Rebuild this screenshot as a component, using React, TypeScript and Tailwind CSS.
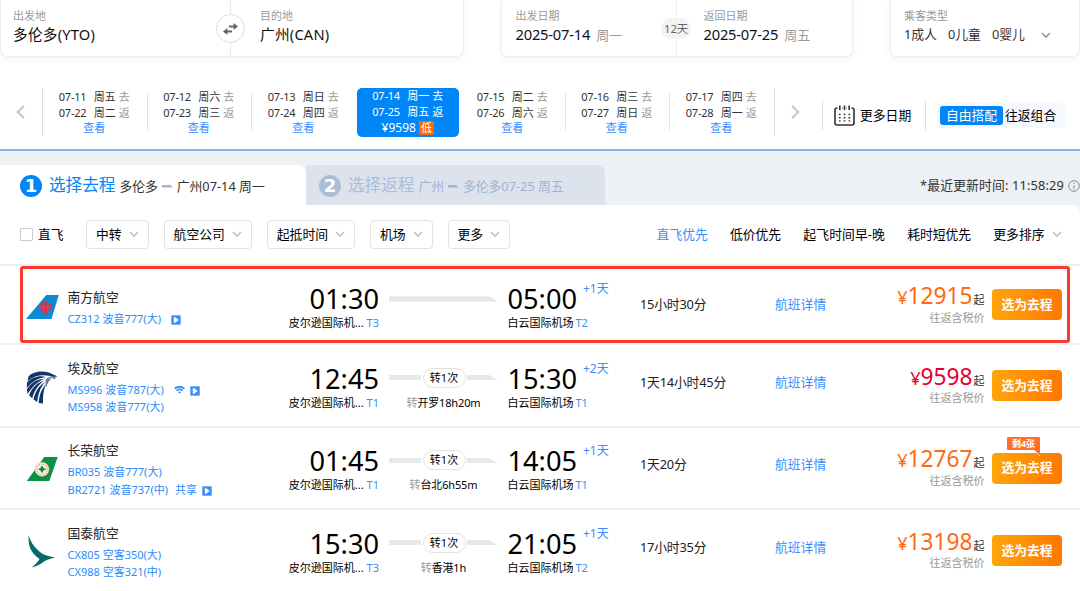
import type { ReactNode } from "react";
import clsx from "clsx";

interface Flight {
  airline: string;
  logo: ReactNode;
  lines: { text: string; wifi?: boolean; video?: boolean; share?: boolean }[];
  depart: string;
  departTerminal: string;
  arrive: string;
  arriveTerminal: string;
  plus: string;
  transfer?: string;
  duration: string;
  price: string;
  lowest?: boolean;
  left?: string;
  highlighted?: boolean;
}

const Chevron = ({ className }: { className?: string }) => (
  <svg className={clsx("shrink-0", className)} width="10" height="7" viewBox="0 0 10 7" fill="none" stroke="currentColor" strokeWidth="1.7">
    <path d="M1 1l4 4L9 1" />
  </svg>
);

const SwapIcon = () => (
  <svg width="15" height="12" viewBox="0 0 15 12" fill="none" stroke="#666" strokeWidth="1.9">
    <path d="M6 3.500h6M3 8.500h6" />
    <path d="M10.600 0L15 3.500 10.600 7zM4.400 5L0 8.500 4.400 12z" fill="#666" stroke="none" />
  </svg>
);

const CalendarIcon = () => (
  <svg width="21" height="21" viewBox="0 0 21 21" fill="none" stroke="#333" strokeWidth="1.6">
    <path d="M3.500 3H3a2 2 0 0 0-2 2v13a2 2 0 0 0 2 2h15a2 2 0 0 0 2-2V5a2 2 0 0 0-2-2h-.5M8 3h.5M12.500 3h.5M5.800.5v4.500M10.500.5v4.500M15.200.5v4.500" />
    <path d="M4.900 9.500h11.500M4.900 12.700h11.500M4.900 15.900h11.500" strokeWidth="1.400" strokeDasharray="1.700 3.100" />
  </svg>
);

const VideoIcon = () => (
  <svg width="10" height="10" viewBox="0 0 10 10" className="shrink-0">
    <path d="M.3.3h9.4v9.4H.3z" fill="#3b8dfb" />
    <path d="M2.8 2.3h1.4L7.6 5 4.2 7.7H2.8z" fill="#fff" />
  </svg>
);

const WifiIcon = () => (
  <svg width="11" height="8" viewBox="0 0 11 8" className="shrink-0" fill="none" stroke="#3b8dfb" strokeWidth="1.7">
    <path d="M.6 2.6c2.8-2.4 7-2.4 9.8 0M2.5 4.7c1.8-1.5 4.2-1.5 6 0" />
    <path d="M4 6l1.5 1.7L7 6c-.9-.8-2.1-.8-3 0z" fill="#3b8dfb" stroke="none" />
  </svg>
);

const SouthernLogo = () => (
  <svg width="33" height="26" viewBox="0 0 33 26">
    <path d="M20.3 1h12.5l-7.3 24H0z" fill="#0c8bd2" />
    <g fill="#ea2a3c">
      <path d="M17.6 9.600h4l-.4-2h-3.200zM17.800 10.300h3.800l-.4 7.200 1 1.500-2.500 1.600-2.500-1.600 1-1.500z" />
      <path d="M16.700 9.800c-2.200-1-3.600.4-3.600 2.400l1 2.700h1l.3 2 1.700-.5zM22.500 9.800c2.200-1 3.600.4 3.600 2.400l-1 2.700h-1l-.3 2-1.700-.5z" />
    </g>
    <path d="M17.200 10.500v5.500M22 10.500v5.500M18.200 12.500l1 .9M21 12.500l-1 .9M13.800 12.500h2M23.500 12.500h2" stroke="#8a78a8" strokeWidth=".7" />
  </svg>
);

const EgyptLogo = () => (
  <svg width="33" height="34" viewBox="0 0 33 34" fill="#12356b">
    <path d="M2.5 6.500C8 0 21 .3 27 4.400l4.500 1.900-3.400 1C20 4 10 4 1.500 11z" />
    <path d="M1 12.500C6 7 14 5 20 7.200 12 7.500 6 12 .8 18zM.8 19.500C5 13 11 9 18 9 11 12 6 17 1.600 24z" />
    <path d="M3 25C6 18 11 12.500 18 10.500 12 15 8 21 6.200 28.500zM7.500 29.500C9 22 13 15.500 19 12 14 18 12 25 11.200 32zM12.700 33C13 26 15.500 18.500 20 14c-2.600 6-3.200 13-3 19.500z" />
    <path d="M20 9c3-2.400 7-2.600 11-2.400-2 .6-2 1.300-1.600 2.700-2-1-4-.6-5.400.7-1.400 1.500-2.500 3.700-3.800 7.200-.7-3-.9-5.600-.2-8.200z" fill="#5f7da6" />
    <path d="M22 8.900l6-1.300-2 1.600z" fill="#fff" />
  </svg>
);

const EvaLogo = () => (
  <svg width="33" height="26" viewBox="0 0 33 26">
    <path d="M18.300 1h13.400l-8.400 24H.8z" fill="#079346" />
    <circle cx="16" cy="13.300" r="7" fill="#fdf3e6" stroke="#e9a77a" strokeWidth=".6" />
    <circle cx="16" cy="13.300" r="5.200" fill="none" stroke="#e88a63" strokeWidth="1.100" strokeDasharray="1 .9" />
    <path d="M16 10l1.100 2.200 2.200 1.100-2.200 1.100-1.100 2.200-1.100-2.200-2.200-1.100 2.200-1.100z" fill="#079346" stroke="#079346" />
  </svg>
);

const CathayLogo = () => (
  <svg width="33" height="34" viewBox="0 0 33 34" fill="#07696b">
    <path d="M2.600.5C2.400 7 3 12 6.300 17c1.600 2.500 4 4.800 7.200 7-1.600 3-4.300 5.700-8 8.500 5.500-1.400 8.500-3.200 11.800-5.600 3.700-2.600 7.500-3.100 12-4.600-5-.5-12-1.500-17-6.700C7.500 11.200 4.600 6.500 2.600.5z" />
  </svg>
);

const dates = [
  ["07-11", "周五", "07-22", "周二"],
  ["07-12", "周六", "07-23", "周三"],
  ["07-13", "周日", "07-24", "周四"],
  ["07-14", "周一", "07-25", "周五"],
  ["07-15", "周二", "07-26", "周六"],
  ["07-16", "周三", "07-27", "周日"],
  ["07-17", "周四", "07-28", "周一"],
];

const flights: Flight[] = [
  {
    airline: "南方航空", logo: <SouthernLogo />, lines: [{ text: "CZ312 波音777(大)", video: true }],
    depart: "01:30", departTerminal: "T3", arrive: "05:00", arriveTerminal: "T2", plus: "+1天",
    duration: "15小时30分", price: "12915", highlighted: true,
  },
  {
    airline: "埃及航空", logo: <EgyptLogo />, lines: [{ text: "MS996 波音787(大)", wifi: true, video: true }, { text: "MS958 波音777(大)" }],
    depart: "12:45", departTerminal: "T1", arrive: "15:30", arriveTerminal: "T1", plus: "+2天",
    transfer: "开罗18h20m", duration: "1天14小时45分", price: "9598", lowest: true,
  },
  {
    airline: "长荣航空", logo: <EvaLogo />, lines: [{ text: "BR035 波音777(大)" }, { text: "BR2721 波音737(中)", share: true, video: true }],
    depart: "01:45", departTerminal: "T1", arrive: "14:05", arriveTerminal: "T1", plus: "+1天",
    transfer: "台北6h55m", duration: "1天20分", price: "12767", left: "剩4张",
  },
  {
    airline: "国泰航空", logo: <CathayLogo />, lines: [{ text: "CX805 空客350(大)" }, { text: "CX988 空客321(中)" }],
    depart: "15:30", departTerminal: "T3", arrive: "21:05", arriveTerminal: "T2", plus: "+1天",
    transfer: "香港1h", duration: "17小时35分", price: "13198",
  },
];

function Place({ label, value, week }: { label: string; value: string; week?: string }) {
  return (
    <div className="pt-[9px]">
      <div className="text-[11px] leading-[14px] text-[#999]">{label}</div>
      <div className={clsx("mt-px text-[14.7px] leading-5 text-[#111]", week ? "tracking-[-0.2px]" : "tracking-[0.2px]")}>
        {value}
        {week && <span className="ml-1.5 text-[13px] tracking-normal text-[#999]">{week}</span>}
      </div>
    </div>
  );
}

function SearchBar() {
  const card = "h-[57px] rounded-b-md border-x border-b border-[#ededed] bg-white shadow-[0_2px_8px_rgba(0,0,0,0.05)] flex";
  return (
    <div className="flex h-[57px]">
      <div className={clsx(card, "relative w-[464px] pl-3")}>
        <div className="w-[247px]"><Place label="出发地" value="多伦多(YTO)" /></div>
        <Place label="目的地" value="广州(CAN)" />
        <div className="absolute left-[229px] top-0 h-full w-px bg-[#e8e8e8]" />
        <div className="absolute left-[215px] top-[14px] flex size-[29px] items-center justify-center rounded-full border border-[#ddd] bg-white"><SwapIcon /></div>
      </div>
      <div className={clsx(card, "relative ml-[37px] w-[352px] pl-[13.500px]")}>
        <div className="w-[188px]"><Place label="出发日期" value="2025-07-14" week="周一" /></div>
        <Place label="返回日期" value="2025-07-25" week="周五" />
        <div className="absolute left-[174px] top-0 h-full w-px bg-[#ececec]" />
        <div className="absolute left-[159px] top-[18px] h-[21px] w-[30px] rounded-full bg-[#f3f3f3] text-center text-[11.5px] leading-[21px] tracking-[-0.3px] text-[#666]">12天</div>
      </div>
      <div className={clsx(card, "ml-[37px] w-[190px] pl-[13px]")}>
        <div className="pt-[9px]">
          <div className="text-[11px] leading-[14px] text-[#999]">乘客类型</div>
          <div className="mt-px flex items-center text-[12.8px] leading-5 text-[#333]">
            <span className="w-11">1成人</span>
            <span className="w-11">0儿童</span>
            <span className="w-[49px]">0婴儿</span>
            <Chevron className="mt-0.5 text-[#999]" />
          </div>
        </div>
      </div>
    </div>
  );
}

function DateBar() {
  return (
    <div className="flex h-[92px] pt-[31px] text-[11px]">
      <div className="flex h-12 w-[43px] items-center justify-end border-r border-[#ddd] pr-[17px]">
        <svg width="9" height="14" viewBox="0 0 9 14" fill="none" stroke="#c4c4c4" strokeWidth="1.8"><path d="M8 1L1.500 7 8 13" /></svg>
      </div>
      {dates.map(([go, goDay, back, backDay], i) => {
        const active = i === 3;
        return (
          <div key={go} className="relative flex h-12 w-[104.500px] justify-center pr-0.5">
            <div className={clsx("w-[102px] text-center", active ? "h-[49px] rounded-[5px] bg-[#0086f6] text-white" : "pt-px text-[#333]")}>
              {[[go, goDay, "去"], [back, backDay, "返"]].map(([d, w, t]) => (
                <div key={t} className="flex h-[15.500px] justify-center leading-[16px]">
                  <span className="w-[35px] text-left tracking-[-0.2px]">{d}</span>
                  <span className="w-[25px] text-left">{w}</span>
                  <span className={active ? "" : "text-[#999]"}>{t}</span>
                </div>
              ))}
              {active ? (
                <div className="flex items-center justify-center gap-[3px] pt-px leading-[16px]">
                  <span className="text-[12px]">¥9598</span>
                  <span className="h-3.5 w-[15px] rounded-[1px] bg-[#ff6a00] leading-[14px]">低</span>
                </div>
              ) : (
                <div className="leading-[16px] text-[#3b8dfb]">查看</div>
              )}
            </div>
            {i !== 2 && i !== 3 && i !== 6 && <div className="absolute right-0 top-[5px] h-[37px] w-px bg-[#e3e3e3]" />}
          </div>
        );
      })}
      <div className="-ml-px flex h-12 w-[26.500px] items-center justify-end border-l border-[#ddd]">
        <svg width="9" height="14" viewBox="0 0 9 14" fill="none" stroke="#c4c4c4" strokeWidth="1.800"><path d="M1 1l6.500 6L1 13" /></svg>
      </div>
      <div className="ml-[22px] mt-[13px] flex h-[29px] w-[104px] items-center border-x border-[#ddd] pl-[11px] text-[12.8px] text-black">
        <CalendarIcon />
        <span className="ml-[5px] whitespace-nowrap">更多日期</span>
      </div>
      <div className="ml-[11px] mt-[15px] flex h-[25px] w-[128px] items-center rounded bg-[#f5f8fe] pl-[3px] text-[12.8px] text-black">
        <span className="h-[19px] w-[63px] rounded-[3px] bg-[#0086f6] text-center leading-[19px] text-white">自由搭配</span>
        <span className="ml-0.5">往返组合</span>
      </div>
    </div>
  );
}

function Step({ n, title, from, to, active }: { n: number; title: string; from: string; to: string; active?: boolean }) {
  return (
    <div className={clsx("flex h-10 items-center whitespace-nowrap text-[12.8px]", active ? "w-[306px] rounded-tr-lg bg-white pl-5 text-[#333]" : "w-[299px] rounded-tr-lg bg-[#dce3ed] pl-[13px] text-[#9fb3d1]")}>
      <span className={clsx("mt-0.5 flex size-[22px] items-center justify-center rounded-full font-['DejaVu_Sans','Noto_Sans'] text-[18px] leading-none font-bold text-white", active ? "bg-[#0086f6]" : "bg-[#acbdd8]")}>{n}</span>
      <span className={clsx("ml-[7px] pt-px text-[16.600px]", active ? "text-[#0086f6]" : "text-[#acbdd8]")}>{title}</span>
      <span className="ml-1 pt-[3px]">{from}</span>
      <svg className="mx-1 mt-0.5" width="11" height="4" viewBox="0 0 11 4"><path d="M0 1h7V0l4 3.600H0z" fill="#9fb5d6" /></svg>
      <span className="pt-[3px]">{to}</span>
    </div>
  );
}

function Filters() {
  return (
    <div className="flex h-[59px] items-center rounded-tr-lg bg-white pl-5 text-[12.8px] whitespace-nowrap text-black">
      <span className="size-[13px] rounded-[1px] border border-[#ccc]" />
      <span className="ml-[5px] w-12">直飞</span>
      <div className="flex gap-[15px]">
        {["中转", "航空公司", "起抵时间", "机场", "更多"].map((f) => (
          <div key={f} className="flex h-[29px] items-center gap-[7px] rounded border border-[#e2e2e2] px-[9px]">
            {f}
            <Chevron className="text-[#c4c4c4]" />
          </div>
        ))}
      </div>
      <div className="ml-auto flex items-center gap-[22.200px] pr-[18.500px]">
        <span className="text-[#3b8dfb]">直飞优先</span>
        <span>低价优先</span>
        <span className="tracking-[0.1px]">起飞时间早-晚</span>
        <span>耗时短优先</span>
        <span className="flex items-center gap-[7px]">更多排序<Chevron className="text-[#c4c4c4]" /></span>
      </div>
    </div>
  );
}

function FlightRow({ f }: { f: Flight }) {
  const direct = !f.transfer;
  return (
    <div className={clsx("relative flex border-b-2 border-[#eef2f7] whitespace-nowrap text-black", direct ? "h-[79px]" : "h-[82.500px]")}>
      <div className={clsx("w-[67.500px] pl-[26px]", f.lines.length === 1 ? "pt-7" : f.left ? "pt-[28px]" : "pt-[24.500px]")}>{f.logo}</div>
      <div className={clsx("w-[192.500px]", direct ? "pt-[21.500px]" : "pt-[13.500px]")}>
        <div className="text-[12.8px] leading-[18px] text-[#222]">{f.airline}</div>
        <div className="mt-[4.800px]">
          {f.lines.map((l) => (
            <div key={l.text} className="flex h-[17.500px] items-center text-[11px] text-[#2b8cfb]">
              <span>{l.text}</span>
              {l.share && <span className="ml-[7px] mr-[5px]">共享</span>}
              {l.wifi && <span className="ml-2.5 mr-[5px]"><WifiIcon /></span>}
              {l.video && <span className={l.wifi || l.share ? "pt-px" : "ml-2.5 pt-px"}><VideoIcon /></span>}
            </div>
          ))}
        </div>
      </div>
      <div className={clsx("w-[119px] text-right", direct ? "pt-[17px]" : "pt-[17.500px]")}>
        <div className="text-[27.200px] leading-[32px]">{f.depart}</div>
        <div className="text-[11px] leading-[15px]">皮尔逊国际机... <span className="text-[#3b8dfb]">{f.departTerminal}</span></div>
      </div>
      <div className={clsx("ml-2.5 w-[109px]", direct ? "pt-[30px]" : "pt-[22.500px]")}>
        {direct ? (
          <svg width="109" height="6" viewBox="0 0 109 6"><path d="M0 .3h101l8 5.400H0z" fill="#e8e8e8" /></svg>
        ) : (
          <>
            <div className="flex items-center justify-between">
              <span className="h-[5px] w-8 bg-[#e8e8e8]" />
              <span className="h-5 w-[43px] rounded-full border border-[#e3e3e3] text-center text-[11px] leading-[18px]">转1次</span>
              <svg width="31" height="5" viewBox="0 0 31 5"><path d="M0 0h22l9 5H0z" fill="#e8e8e8" /></svg>
            </div>
            <div className="mt-[7px] text-center text-[11px] leading-[15px] tracking-[-0.15px]"><span className="text-[#999]">转</span>{f.transfer}</div>
          </>
        )}
      </div>
      <div className={clsx("ml-[9.500px] w-[132.500px]", direct ? "pt-[17px]" : "pt-[17.500px]")}>
        <div className="flex text-[27.200px] leading-[32px]">
          {f.arrive}
          <span className="ml-1.5 -mt-0.5 text-[12px] leading-[15px] text-[#3b8dfb]">{f.plus}</span>
        </div>
        <div className="text-[11px] leading-[15px]">白云国际机场<span className="ml-0.5 text-[#3b8dfb]">{f.arriveTerminal}</span></div>
      </div>
      <div className={clsx("w-[135px] text-[12.8px] leading-[18px] tracking-[-0.2px] text-[#222]", direct ? "pt-[29px]" : "pt-[27.500px]")}>{f.duration}</div>
      <div className={clsx("w-[70px] text-[12.8px] leading-[18px] text-[#3b8dfb]", direct ? "pt-[29px]" : "pt-[27.500px]")}>航班详情</div>
      <div className={clsx("w-[139.500px] text-right", direct ? "pt-[15px]" : "pt-[16.500px]")}>
        <div className="h-[29.500px] leading-[30px]">
          <span className={clsx("text-[18px]", f.lowest ? "text-[#e8002d]" : "text-[#ff6913]")}>¥</span>
          <span className={clsx("text-[22.700px]", f.lowest ? "text-[#e8002d]" : "text-[#ff6913]")}>{f.price}</span>
          <span className="ml-px text-[11px] text-[#333]">起</span>
        </div>
        <div className="text-[11px] leading-[14px] text-[#999]">往返含税价</div>
      </div>
      <div className={clsx("relative ml-[7.500px]", direct ? "pt-[23px]" : "pt-[25px]")}>
        <button className="h-[31px] w-[70px] rounded bg-linear-to-r from-[#ffa50a] to-[#ff7700] text-[12.8px] font-bold text-white">选为去程</button>
        {f.left && (
          <div className="absolute left-[15px] top-[9px]">
            <div className="h-[13px] w-[33px] rounded-[1px] bg-[#ff6f28] text-center text-[9px] leading-[13px] font-bold text-white">{f.left}</div>
            <svg className="ml-[27px]" width="6" height="6" viewBox="0 0 6 6"><path d="M0 0h6v6z" fill="#ff6f28" /><path d="M0 0l6 6" stroke="#fff" strokeWidth=".7" /></svg>
          </div>
        )}
      </div>
      {f.highlighted && <div className="pointer-events-none absolute left-5 top-0 h-[77px] w-[1050px] rounded-[3px] border-3 border-[#fb3a2e]" />}
    </div>
  );
}

export default function App() {
  return (
    <div className="h-[591px] w-[1080px] overflow-hidden bg-white font-['Noto_Sans','Noto_Sans_CJK_SC',sans-serif]">
      <SearchBar />
      <DateBar />
      <div className="border-t-2 border-[#84b5f5] bg-[#edf0f5]">
        <div className="flex h-[54px] items-end">
          <Step n={1} title="选择去程" from="多伦多" to="广州07-14 周一" active />
          <Step n={2} title="选择返程" from="广州" to="多伦多07-25 周五" />
          <div className="ml-auto flex h-10 items-center pt-0.5 text-[12.8px] tracking-[0.15px] text-[#333]">
            *最近更新时间: 11:58:29
            <svg className="ml-1" width="12" height="12" viewBox="0 0 12 12" fill="none" stroke="#888"><circle cx="6" cy="6" r="5.300" /><path d="M6 5.200v4M6 2.700v1.300" /></svg>
          </div>
        </div>
        <Filters />
      </div>
      <div className="border-t-2 border-[#eaeef4]">
        {flights.map((f) => <FlightRow key={f.airline} f={f} />)}
      </div>
    </div>
  );
}
